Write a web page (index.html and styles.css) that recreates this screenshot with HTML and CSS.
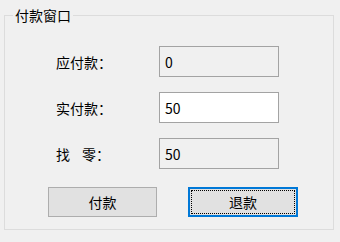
FILE: index.html
```html
<!DOCTYPE html>
<html lang="zh-CN">
<head>
<meta charset="utf-8">
<link rel="stylesheet" href="styles.css">
</head>
<body>
<fieldset class="group">
  <legend class="title">付款窗口</legend>
  <div class="form">
    <span class="label">应付款：</span>
    <div class="field readonly">0</div>
    <span class="label">实付款：</span>
    <div class="field">50</div>
    <span class="label">找<span class="gap"></span>零：</span>
    <div class="field readonly">50</div>
  </div>
  <div class="buttons">
    <button class="btn">付款</button>
    <button class="btn focused"><span class="focus-rect">退款</span></button>
  </div>
</fieldset>
</body>
</html>
```
FILE: styles.css
```css
html, body {
  margin: 0;
  padding: 0;
  background: #f0f0f0;
  width: 340px;
  height: 242px;
  overflow: hidden;
}
body {
  font-family: "Noto Sans CJK SC", "Microsoft YaHei", sans-serif;
  font-size: 14px;
  color: #000;
}
.group {
  margin: 7px 6px 0 4px;
  padding: 23px 0 12px 0;
  border: 1px solid #dcdcdc;
  min-width: 0;
}
.title {
  margin-left: 8px;
  padding: 0 2px;
  line-height: 16px;
  font-size: 14px;
}
.form {
  display: grid;
  grid-template-columns: 103px 120px;
  grid-auto-rows: 31px;
  row-gap: 15px;
  padding-left: 51px;
  align-items: center;
}
.label {
  line-height: 16px;
  white-space: nowrap;
}
.gap {
  display: inline-block;
  width: 12px;
}
.field {
  box-sizing: border-box;
  height: 31px;
  border: 1px solid #a3a3a3;
  background: #fff;
  padding-left: 5px;
  display: flex;
  align-items: center;
  line-height: 16px;
}
.field.readonly {
  background: #f0f0f0;
}
.buttons {
  display: flex;
  gap: 31px;
  margin-top: 18px;
  padding-left: 43px;
}
.btn {
  box-sizing: border-box;
  width: 109px;
  height: 30px;
  border: 1px solid #adadad;
  background: #e1e1e1;
  font-family: inherit;
  font-size: 14px;
  color: #000;
  padding: 0;
  display: flex;
  align-items: center;
  justify-content: center;
}
.btn.focused {
  width: 110px;
  border: 2px solid #0078d7;
  padding: 1px;
}
.focus-rect {
  box-sizing: border-box;
  width: 100%;
  height: 100%;
  border: 1px dotted #000;
  display: flex;
  align-items: center;
  justify-content: center;
}
```
